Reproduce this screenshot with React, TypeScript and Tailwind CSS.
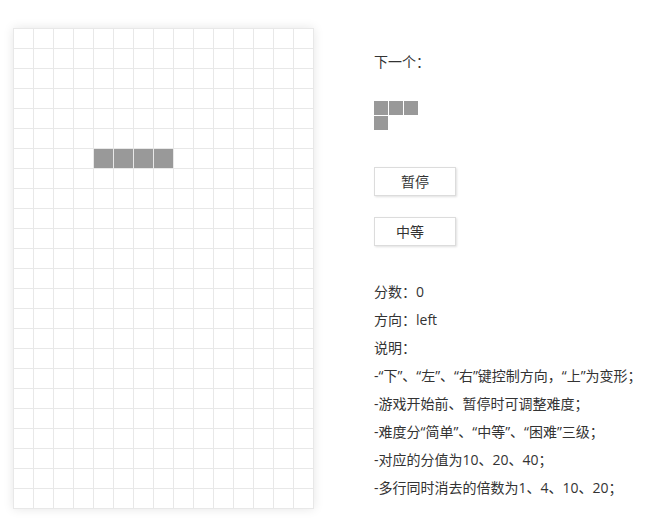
import React from "react";

const COLS = 15;
const ROWS = 24;

// falling piece on the board: row 6, columns 4-7
const filled = new Set(["6-4", "6-5", "6-6", "6-7"]);

// next piece preview (L shape)
const next = [
  [1, 1, 1],
  [1, 0, 0],
];

const rules = [
  "-“下”、“左”、“右”键控制方向，“上”为变形；",
  "-游戏开始前、暂停时可调整难度；",
  "-难度分“简单”、“中等”、“困难”三级；",
  "-对应的分值为10、20、40；",
  "-多行同时消去的倍数为1、4、10、20；",
];

function Board() {
  const cells = [];
  for (let r = 0; r < ROWS; r++) {
    for (let c = 0; c < COLS; c++) {
      const on = filled.has(`${r}-${c}`);
      cells.push(
        <div
          key={`${r}-${c}`}
          className={`h-5 w-5 box-border border-l border-t border-[#e8e8e8] ${on ? "bg-[#999999]" : "bg-white"}`}
        />
      );
    }
  }
  return (
    <div className="grid grid-cols-[repeat(15,20px)] grid-rows-[repeat(24,20px)] border-r border-b border-[#e8e8e8] bg-white shadow-[0_0_10px_rgba(0,0,0,0.1)]">
      {cells}
    </div>
  );
}

function Preview() {
  return (
    <div className="flex flex-col">
      {next.map((row, i) => (
        <div key={i} className="flex">
          {row.map((v, j) => (
            <div
              key={j}
              className={`h-[15px] w-[15px] box-border border-r border-b border-white ${v ? "bg-[#999999]" : ""}`}
            />
          ))}
        </div>
      ))}
    </div>
  );
}

export default function App() {
  return (
    <div
      className="flex min-h-[525px] w-[664px] items-start bg-white pl-[13px] pt-[28px] text-[14px] text-[#333]"
      style={{ fontFamily: '"Open Sans", "Noto Sans CJK SC", sans-serif' }}
    >
      <Board />
      <div className="ml-[60px] flex flex-col pt-[20px] leading-[28px]">
        <p>下一个：</p>
        <div className="mt-[25px]">
          <Preview />
        </div>
        <button className="mt-[36px] h-[29px] w-[82px] border border-[#dcdcdc] bg-white text-center leading-[27px] shadow-[1px_1px_2px_rgba(0,0,0,0.12)]">
          暂停
        </button>
        <button className="mt-[21px] h-[29px] w-[82px] border border-[#dcdcdc] bg-white pl-[21px] text-left leading-[27px] shadow-[1px_1px_2px_rgba(0,0,0,0.12)]">
          中等
        </button>
        <div className="mt-[32px]">
          <p>分数：0</p>
          <p>方向：left</p>
          <p>说明：</p>
          {rules.map((t) => (
            <p key={t}>{t}</p>
          ))}
        </div>
      </div>
    </div>
  );
}
